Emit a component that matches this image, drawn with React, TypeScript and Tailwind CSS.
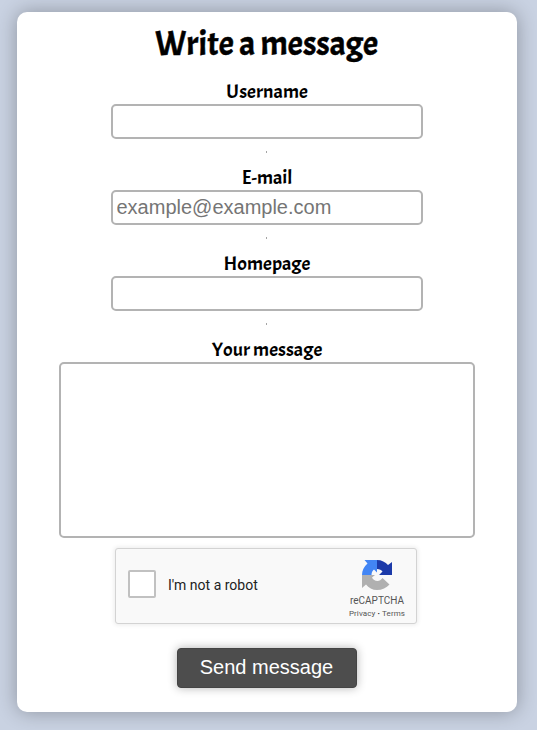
import type { ReactNode } from "react";

const labelFont = "font-['Acme','Lato',sans-serif] font-normal text-black whitespace-nowrap";

function Label({ children, htmlFor }: { children: ReactNode; htmlFor: string }) {
  return (
    <label htmlFor={htmlFor} className={`${labelFont} block h-[26px] text-[20px] leading-[27px]`}>
      {children}
    </label>
  );
}

function Field({ id, label, placeholder }: { id: string; label: string; placeholder?: string }) {
  return (
    <div className="flex h-[86px] flex-col items-center">
      <Label htmlFor={id}>{label}</Label>
      <input
        id={id}
        placeholder={placeholder}
        className="h-[35px] w-[312px] rounded-[5px] border-2 border-[#b3b3b3] bg-white px-[3.5px] text-[20px] outline-none placeholder:text-[#757575]"
      />
      <span className="mt-[12px] mr-px h-[2px] w-px bg-[#a4a4a4]" />
    </div>
  );
}

function RecaptchaLogo() {
  return (
    <svg width="32" height="32" viewBox="0 0 64 64" className="block">
      <path fill="#1c3aa9" d="M32 2C41 2 49 6 54 12L62 6V32H36L43 25C41 22 37 20 32 20Z" />
      <path fill="#4285f4" d="M7 2H32V27L26 21C23 23 21 27 21 32H2C2 23 6 15 13 9Z" />
      <path fill="#b0b0b0" d="M2 32H28L22 37C24 41 28 44 33 44C37 44 40 42 43 38L57 51C51 58 42 62 32 62C23 62 15 58 10 51L2 58Z" />
    </svg>
  );
}

export default function App() {
  return (
    <main className="flex h-[730px] w-[537px] overflow-hidden bg-[#c9d2e2] pt-[12px] pl-[17px] font-['Liberation_Sans',Arial,sans-serif]">
      <form
        className="flex h-[700px] w-[500px] flex-col items-center rounded-[10px] bg-white shadow-[0_0_20px_rgba(0,0,0,0.3)]"
        onSubmit={(e) => e.preventDefault()}
      >
        <h1 className={`${labelFont} mr-px h-[66px] text-[34px] leading-[64px] [-webkit-text-stroke:0.5px_black]`}>Write a message</h1>
        <Field id="username" label="Username" />
        <Field id="email" label="E-mail" placeholder="example@example.com" />
        <Field id="homepage" label="Homepage" />
        <Label htmlFor="message">Your message</Label>
        <textarea id="message" className="block h-[176px] w-[416px] shrink-0 resize-none rounded-[5px] border-2 border-[#b3b3b3] bg-white p-1 text-[20px] outline-none" />
        <div className="mt-[10px] mr-[2px] flex h-[76px] w-[302px] shrink-0 rounded-[3px] border border-[#d3d3d3] bg-[#f9f9f9] font-['Roboto',sans-serif] shadow-[0_0_4px_1px_rgba(0,0,0,0.08)]">
          <button type="button" aria-label="I'm not a robot" className="mt-[21px] ml-[12px] h-[28px] w-[28px] rounded-[2px] border-2 border-[#c1c1c1] bg-white" />
          <span className="ml-[12px] w-[164px] text-[14px] leading-[73px] text-[#222]">I'm not a robot</span>
          <div className="ml-[10px] flex w-[70px] flex-col items-center pt-[10px] text-[#555]">
            <RecaptchaLogo />
            <span className="mt-[5px] text-[10px] leading-[10px]">reCAPTCHA</span>
            <span className="mt-[3px] text-[8px] leading-[10px] tracking-[0.1px] whitespace-nowrap">Privacy&nbsp;<b className="text-black">·</b>&nbsp;Terms</span>
          </div>
        </div>
        <button className="mt-[24px] h-[40px] w-[180px] shrink-0 rounded-[4px] border border-[#444] bg-[#4d4d4d] pr-px pb-[2px] text-[20px] text-white shadow-[0_0_10px_rgba(0,0,0,0.3)]">Send message</button>
      </form>
    </main>
  );
}
